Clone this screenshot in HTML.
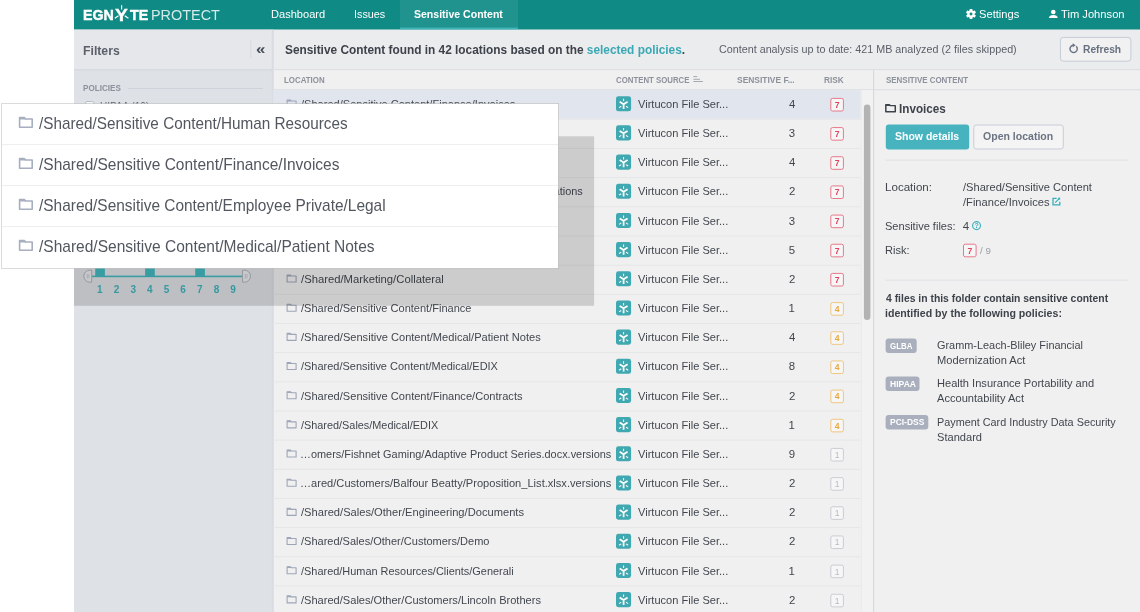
<!DOCTYPE html>
<html><head><meta charset="utf-8"><title>Egnyte Protect - Sensitive Content</title>
<style>
*{box-sizing:border-box;margin:0;padding:0}
html,body{width:1140px;height:612px;overflow:hidden;background:#fff}
body{font-family:"Liberation Sans",sans-serif;font-size:12px;color:#4a4f58;position:relative}
.abs{position:absolute}
.t{position:absolute;white-space:pre;line-height:20px;transform-origin:0 0}
.bd{text-align:center}
#root{position:absolute;left:0;top:0;width:1140px;height:612px;will-change:transform}
</style></head><body>
<div id="root">

<svg class="abs" style="left:0;top:0" width="1140" height="612" viewBox="0 0 1140 612">
<rect x="74.00" y="0.00" width="1066.00" height="612.00" fill="#f0f0f0"/>
<rect x="74.00" y="0.00" width="1066.00" height="29.70" fill="#0f8a84"/>
<rect x="400.00" y="0.00" width="118.00" height="29.70" fill="#21938e"/>
<rect x="400.00" y="27.60" width="118.00" height="2.10" fill="#43b3ba"/>
<rect x="74.00" y="29.70" width="198.30" height="582.30" fill="#dee1e6"/>
<rect x="74.00" y="29.70" width="198.30" height="39.50" fill="#e5e7eb"/>
<rect x="74.00" y="69.20" width="198.30" height="1.20" fill="#d5d8de"/>
<rect x="250.20" y="40.00" width="1.10" height="18.50" fill="#d9dbe0"/>
<rect x="128.00" y="88.00" width="134.70" height="0.90" fill="#cdd1d8"/>
<rect x="272.30" y="29.70" width="867.70" height="39.50" fill="#ebecee"/>
<rect x="272.30" y="69.20" width="867.70" height="1.20" fill="#d9dbe0"/>
<rect x="272.30" y="70.40" width="867.70" height="18.70" fill="#f0f0f0"/>
<rect x="272.30" y="89.10" width="867.70" height="1.20" fill="#dcdfe5"/>
<rect x="271.80" y="29.70" width="2.00" height="582.30" fill="#d9dce3"/>
<rect x="273.20" y="90.30" width="587.60" height="28.47" fill="#e1e5ed"/>
<rect x="273.20" y="118.77" width="587.60" height="1.00" fill="#e5e6e8"/>
<g transform="translate(286.60 99.50) scale(1.0000 1.0000)"><path d="M0.5 0.5 H3.9 L4.7 1.5 H9.5 V7.5 H0.5 Z" fill="none" stroke="#9da5b7" stroke-width="1.10" stroke-linejoin="round"/><path d="M0.5 0.5 H3.9 L4.7 1.9 H0.5 Z" fill="#9da5b7"/></g>
<g transform="translate(616.00 96.20) scale(1.0067 1.0067)"><rect width="15" height="15" rx="2.4" fill="#3fa8b1"/><g stroke="#fff" fill="none"><path d="M7.55 12.7 V7.9 L3.6 5.5 M7.55 7.9 L11.5 5.5" stroke-width="1.75"/><path d="M7.55 2.5 V5 M3.0 11.4 L5.2 10 M12.1 11.4 L9.9 10" stroke-width="1.0"/></g></g>
<rect x="830.80" y="98.40" width="12.60" height="12.60" rx="1.70" fill="#f6f6f6" stroke="#e7788b" stroke-width="1.00"/>
<rect x="273.20" y="147.94" width="587.60" height="1.00" fill="#e5e6e8"/>
<g transform="translate(286.60 128.67) scale(1.0000 1.0000)"><path d="M0.5 0.5 H3.9 L4.7 1.5 H9.5 V7.5 H0.5 Z" fill="none" stroke="#9da5b7" stroke-width="1.10" stroke-linejoin="round"/><path d="M0.5 0.5 H3.9 L4.7 1.9 H0.5 Z" fill="#9da5b7"/></g>
<g transform="translate(616.00 125.37) scale(1.0067 1.0067)"><rect width="15" height="15" rx="2.4" fill="#3fa8b1"/><g stroke="#fff" fill="none"><path d="M7.55 12.7 V7.9 L3.6 5.5 M7.55 7.9 L11.5 5.5" stroke-width="1.75"/><path d="M7.55 2.5 V5 M3.0 11.4 L5.2 10 M12.1 11.4 L9.9 10" stroke-width="1.0"/></g></g>
<rect x="830.80" y="127.57" width="12.60" height="12.60" rx="1.70" fill="#f6f6f6" stroke="#e7788b" stroke-width="1.00"/>
<rect x="273.20" y="177.11" width="587.60" height="1.00" fill="#e5e6e8"/>
<g transform="translate(286.60 157.84) scale(1.0000 1.0000)"><path d="M0.5 0.5 H3.9 L4.7 1.5 H9.5 V7.5 H0.5 Z" fill="none" stroke="#9da5b7" stroke-width="1.10" stroke-linejoin="round"/><path d="M0.5 0.5 H3.9 L4.7 1.9 H0.5 Z" fill="#9da5b7"/></g>
<g transform="translate(616.00 154.54) scale(1.0067 1.0067)"><rect width="15" height="15" rx="2.4" fill="#3fa8b1"/><g stroke="#fff" fill="none"><path d="M7.55 12.7 V7.9 L3.6 5.5 M7.55 7.9 L11.5 5.5" stroke-width="1.75"/><path d="M7.55 2.5 V5 M3.0 11.4 L5.2 10 M12.1 11.4 L9.9 10" stroke-width="1.0"/></g></g>
<rect x="830.80" y="156.74" width="12.60" height="12.60" rx="1.70" fill="#f6f6f6" stroke="#e7788b" stroke-width="1.00"/>
<rect x="273.20" y="206.28" width="587.60" height="1.00" fill="#e5e6e8"/>
<g transform="translate(286.60 187.01) scale(1.0000 1.0000)"><path d="M0.5 0.5 H3.9 L4.7 1.5 H9.5 V7.5 H0.5 Z" fill="none" stroke="#9da5b7" stroke-width="1.10" stroke-linejoin="round"/><path d="M0.5 0.5 H3.9 L4.7 1.9 H0.5 Z" fill="#9da5b7"/></g>
<g transform="translate(616.00 183.71) scale(1.0067 1.0067)"><rect width="15" height="15" rx="2.4" fill="#3fa8b1"/><g stroke="#fff" fill="none"><path d="M7.55 12.7 V7.9 L3.6 5.5 M7.55 7.9 L11.5 5.5" stroke-width="1.75"/><path d="M7.55 2.5 V5 M3.0 11.4 L5.2 10 M12.1 11.4 L9.9 10" stroke-width="1.0"/></g></g>
<rect x="830.80" y="185.91" width="12.60" height="12.60" rx="1.70" fill="#f6f6f6" stroke="#e7788b" stroke-width="1.00"/>
<rect x="273.20" y="235.45" width="587.60" height="1.00" fill="#e5e6e8"/>
<g transform="translate(286.60 216.18) scale(1.0000 1.0000)"><path d="M0.5 0.5 H3.9 L4.7 1.5 H9.5 V7.5 H0.5 Z" fill="none" stroke="#9da5b7" stroke-width="1.10" stroke-linejoin="round"/><path d="M0.5 0.5 H3.9 L4.7 1.9 H0.5 Z" fill="#9da5b7"/></g>
<g transform="translate(616.00 212.88) scale(1.0067 1.0067)"><rect width="15" height="15" rx="2.4" fill="#3fa8b1"/><g stroke="#fff" fill="none"><path d="M7.55 12.7 V7.9 L3.6 5.5 M7.55 7.9 L11.5 5.5" stroke-width="1.75"/><path d="M7.55 2.5 V5 M3.0 11.4 L5.2 10 M12.1 11.4 L9.9 10" stroke-width="1.0"/></g></g>
<rect x="830.80" y="215.08" width="12.60" height="12.60" rx="1.70" fill="#f6f6f6" stroke="#e7788b" stroke-width="1.00"/>
<rect x="273.20" y="264.62" width="587.60" height="1.00" fill="#e5e6e8"/>
<g transform="translate(286.60 245.35) scale(1.0000 1.0000)"><path d="M0.5 0.5 H3.9 L4.7 1.5 H9.5 V7.5 H0.5 Z" fill="none" stroke="#9da5b7" stroke-width="1.10" stroke-linejoin="round"/><path d="M0.5 0.5 H3.9 L4.7 1.9 H0.5 Z" fill="#9da5b7"/></g>
<g transform="translate(616.00 242.05) scale(1.0067 1.0067)"><rect width="15" height="15" rx="2.4" fill="#3fa8b1"/><g stroke="#fff" fill="none"><path d="M7.55 12.7 V7.9 L3.6 5.5 M7.55 7.9 L11.5 5.5" stroke-width="1.75"/><path d="M7.55 2.5 V5 M3.0 11.4 L5.2 10 M12.1 11.4 L9.9 10" stroke-width="1.0"/></g></g>
<rect x="830.80" y="244.25" width="12.60" height="12.60" rx="1.70" fill="#f6f6f6" stroke="#e7788b" stroke-width="1.00"/>
<rect x="273.20" y="293.79" width="587.60" height="1.00" fill="#e5e6e8"/>
<g transform="translate(286.60 274.52) scale(1.0000 1.0000)"><path d="M0.5 0.5 H3.9 L4.7 1.5 H9.5 V7.5 H0.5 Z" fill="none" stroke="#9da5b7" stroke-width="1.10" stroke-linejoin="round"/><path d="M0.5 0.5 H3.9 L4.7 1.9 H0.5 Z" fill="#9da5b7"/></g>
<g transform="translate(616.00 271.22) scale(1.0067 1.0067)"><rect width="15" height="15" rx="2.4" fill="#3fa8b1"/><g stroke="#fff" fill="none"><path d="M7.55 12.7 V7.9 L3.6 5.5 M7.55 7.9 L11.5 5.5" stroke-width="1.75"/><path d="M7.55 2.5 V5 M3.0 11.4 L5.2 10 M12.1 11.4 L9.9 10" stroke-width="1.0"/></g></g>
<rect x="830.80" y="273.42" width="12.60" height="12.60" rx="1.70" fill="#f6f6f6" stroke="#e7788b" stroke-width="1.00"/>
<rect x="273.20" y="322.96" width="587.60" height="1.00" fill="#e5e6e8"/>
<g transform="translate(286.60 303.69) scale(1.0000 1.0000)"><path d="M0.5 0.5 H3.9 L4.7 1.5 H9.5 V7.5 H0.5 Z" fill="none" stroke="#9da5b7" stroke-width="1.10" stroke-linejoin="round"/><path d="M0.5 0.5 H3.9 L4.7 1.9 H0.5 Z" fill="#9da5b7"/></g>
<g transform="translate(616.00 300.39) scale(1.0067 1.0067)"><rect width="15" height="15" rx="2.4" fill="#3fa8b1"/><g stroke="#fff" fill="none"><path d="M7.55 12.7 V7.9 L3.6 5.5 M7.55 7.9 L11.5 5.5" stroke-width="1.75"/><path d="M7.55 2.5 V5 M3.0 11.4 L5.2 10 M12.1 11.4 L9.9 10" stroke-width="1.0"/></g></g>
<rect x="830.80" y="302.59" width="12.60" height="12.60" rx="1.70" fill="#f6f6f6" stroke="#f0c67f" stroke-width="1.00"/>
<rect x="273.20" y="352.13" width="587.60" height="1.00" fill="#e5e6e8"/>
<g transform="translate(286.60 332.86) scale(1.0000 1.0000)"><path d="M0.5 0.5 H3.9 L4.7 1.5 H9.5 V7.5 H0.5 Z" fill="none" stroke="#9da5b7" stroke-width="1.10" stroke-linejoin="round"/><path d="M0.5 0.5 H3.9 L4.7 1.9 H0.5 Z" fill="#9da5b7"/></g>
<g transform="translate(616.00 329.56) scale(1.0067 1.0067)"><rect width="15" height="15" rx="2.4" fill="#3fa8b1"/><g stroke="#fff" fill="none"><path d="M7.55 12.7 V7.9 L3.6 5.5 M7.55 7.9 L11.5 5.5" stroke-width="1.75"/><path d="M7.55 2.5 V5 M3.0 11.4 L5.2 10 M12.1 11.4 L9.9 10" stroke-width="1.0"/></g></g>
<rect x="830.80" y="331.76" width="12.60" height="12.60" rx="1.70" fill="#f6f6f6" stroke="#f0c67f" stroke-width="1.00"/>
<rect x="273.20" y="381.30" width="587.60" height="1.00" fill="#e5e6e8"/>
<g transform="translate(286.60 362.03) scale(1.0000 1.0000)"><path d="M0.5 0.5 H3.9 L4.7 1.5 H9.5 V7.5 H0.5 Z" fill="none" stroke="#9da5b7" stroke-width="1.10" stroke-linejoin="round"/><path d="M0.5 0.5 H3.9 L4.7 1.9 H0.5 Z" fill="#9da5b7"/></g>
<g transform="translate(616.00 358.73) scale(1.0067 1.0067)"><rect width="15" height="15" rx="2.4" fill="#3fa8b1"/><g stroke="#fff" fill="none"><path d="M7.55 12.7 V7.9 L3.6 5.5 M7.55 7.9 L11.5 5.5" stroke-width="1.75"/><path d="M7.55 2.5 V5 M3.0 11.4 L5.2 10 M12.1 11.4 L9.9 10" stroke-width="1.0"/></g></g>
<rect x="830.80" y="360.93" width="12.60" height="12.60" rx="1.70" fill="#f6f6f6" stroke="#f0c67f" stroke-width="1.00"/>
<rect x="273.20" y="410.47" width="587.60" height="1.00" fill="#e5e6e8"/>
<g transform="translate(286.60 391.20) scale(1.0000 1.0000)"><path d="M0.5 0.5 H3.9 L4.7 1.5 H9.5 V7.5 H0.5 Z" fill="none" stroke="#9da5b7" stroke-width="1.10" stroke-linejoin="round"/><path d="M0.5 0.5 H3.9 L4.7 1.9 H0.5 Z" fill="#9da5b7"/></g>
<g transform="translate(616.00 387.90) scale(1.0067 1.0067)"><rect width="15" height="15" rx="2.4" fill="#3fa8b1"/><g stroke="#fff" fill="none"><path d="M7.55 12.7 V7.9 L3.6 5.5 M7.55 7.9 L11.5 5.5" stroke-width="1.75"/><path d="M7.55 2.5 V5 M3.0 11.4 L5.2 10 M12.1 11.4 L9.9 10" stroke-width="1.0"/></g></g>
<rect x="830.80" y="390.10" width="12.60" height="12.60" rx="1.70" fill="#f6f6f6" stroke="#f0c67f" stroke-width="1.00"/>
<rect x="273.20" y="439.64" width="587.60" height="1.00" fill="#e5e6e8"/>
<g transform="translate(286.60 420.37) scale(1.0000 1.0000)"><path d="M0.5 0.5 H3.9 L4.7 1.5 H9.5 V7.5 H0.5 Z" fill="none" stroke="#9da5b7" stroke-width="1.10" stroke-linejoin="round"/><path d="M0.5 0.5 H3.9 L4.7 1.9 H0.5 Z" fill="#9da5b7"/></g>
<g transform="translate(616.00 417.07) scale(1.0067 1.0067)"><rect width="15" height="15" rx="2.4" fill="#3fa8b1"/><g stroke="#fff" fill="none"><path d="M7.55 12.7 V7.9 L3.6 5.5 M7.55 7.9 L11.5 5.5" stroke-width="1.75"/><path d="M7.55 2.5 V5 M3.0 11.4 L5.2 10 M12.1 11.4 L9.9 10" stroke-width="1.0"/></g></g>
<rect x="830.80" y="419.27" width="12.60" height="12.60" rx="1.70" fill="#f6f6f6" stroke="#f0c67f" stroke-width="1.00"/>
<rect x="273.20" y="468.81" width="587.60" height="1.00" fill="#e5e6e8"/>
<g transform="translate(286.60 449.54) scale(1.0000 1.0000)"><path d="M0.5 0.5 H3.9 L4.7 1.5 H9.5 V7.5 H0.5 Z" fill="none" stroke="#9da5b7" stroke-width="1.10" stroke-linejoin="round"/><path d="M0.5 0.5 H3.9 L4.7 1.9 H0.5 Z" fill="#9da5b7"/></g>
<g transform="translate(616.00 446.24) scale(1.0067 1.0067)"><rect width="15" height="15" rx="2.4" fill="#3fa8b1"/><g stroke="#fff" fill="none"><path d="M7.55 12.7 V7.9 L3.6 5.5 M7.55 7.9 L11.5 5.5" stroke-width="1.75"/><path d="M7.55 2.5 V5 M3.0 11.4 L5.2 10 M12.1 11.4 L9.9 10" stroke-width="1.0"/></g></g>
<rect x="830.80" y="448.44" width="12.60" height="12.60" rx="1.70" fill="#f6f6f6" stroke="#c9ccd3" stroke-width="1.00"/>
<rect x="273.20" y="497.98" width="587.60" height="1.00" fill="#e5e6e8"/>
<g transform="translate(286.60 478.71) scale(1.0000 1.0000)"><path d="M0.5 0.5 H3.9 L4.7 1.5 H9.5 V7.5 H0.5 Z" fill="none" stroke="#9da5b7" stroke-width="1.10" stroke-linejoin="round"/><path d="M0.5 0.5 H3.9 L4.7 1.9 H0.5 Z" fill="#9da5b7"/></g>
<g transform="translate(616.00 475.41) scale(1.0067 1.0067)"><rect width="15" height="15" rx="2.4" fill="#3fa8b1"/><g stroke="#fff" fill="none"><path d="M7.55 12.7 V7.9 L3.6 5.5 M7.55 7.9 L11.5 5.5" stroke-width="1.75"/><path d="M7.55 2.5 V5 M3.0 11.4 L5.2 10 M12.1 11.4 L9.9 10" stroke-width="1.0"/></g></g>
<rect x="830.80" y="477.61" width="12.60" height="12.60" rx="1.70" fill="#f6f6f6" stroke="#c9ccd3" stroke-width="1.00"/>
<rect x="273.20" y="527.15" width="587.60" height="1.00" fill="#e5e6e8"/>
<g transform="translate(286.60 507.88) scale(1.0000 1.0000)"><path d="M0.5 0.5 H3.9 L4.7 1.5 H9.5 V7.5 H0.5 Z" fill="none" stroke="#9da5b7" stroke-width="1.10" stroke-linejoin="round"/><path d="M0.5 0.5 H3.9 L4.7 1.9 H0.5 Z" fill="#9da5b7"/></g>
<g transform="translate(616.00 504.58) scale(1.0067 1.0067)"><rect width="15" height="15" rx="2.4" fill="#3fa8b1"/><g stroke="#fff" fill="none"><path d="M7.55 12.7 V7.9 L3.6 5.5 M7.55 7.9 L11.5 5.5" stroke-width="1.75"/><path d="M7.55 2.5 V5 M3.0 11.4 L5.2 10 M12.1 11.4 L9.9 10" stroke-width="1.0"/></g></g>
<rect x="830.80" y="506.78" width="12.60" height="12.60" rx="1.70" fill="#f6f6f6" stroke="#c9ccd3" stroke-width="1.00"/>
<rect x="273.20" y="556.32" width="587.60" height="1.00" fill="#e5e6e8"/>
<g transform="translate(286.60 537.05) scale(1.0000 1.0000)"><path d="M0.5 0.5 H3.9 L4.7 1.5 H9.5 V7.5 H0.5 Z" fill="none" stroke="#9da5b7" stroke-width="1.10" stroke-linejoin="round"/><path d="M0.5 0.5 H3.9 L4.7 1.9 H0.5 Z" fill="#9da5b7"/></g>
<g transform="translate(616.00 533.75) scale(1.0067 1.0067)"><rect width="15" height="15" rx="2.4" fill="#3fa8b1"/><g stroke="#fff" fill="none"><path d="M7.55 12.7 V7.9 L3.6 5.5 M7.55 7.9 L11.5 5.5" stroke-width="1.75"/><path d="M7.55 2.5 V5 M3.0 11.4 L5.2 10 M12.1 11.4 L9.9 10" stroke-width="1.0"/></g></g>
<rect x="830.80" y="535.95" width="12.60" height="12.60" rx="1.70" fill="#f6f6f6" stroke="#c9ccd3" stroke-width="1.00"/>
<rect x="273.20" y="585.49" width="587.60" height="1.00" fill="#e5e6e8"/>
<g transform="translate(286.60 566.22) scale(1.0000 1.0000)"><path d="M0.5 0.5 H3.9 L4.7 1.5 H9.5 V7.5 H0.5 Z" fill="none" stroke="#9da5b7" stroke-width="1.10" stroke-linejoin="round"/><path d="M0.5 0.5 H3.9 L4.7 1.9 H0.5 Z" fill="#9da5b7"/></g>
<g transform="translate(616.00 562.92) scale(1.0067 1.0067)"><rect width="15" height="15" rx="2.4" fill="#3fa8b1"/><g stroke="#fff" fill="none"><path d="M7.55 12.7 V7.9 L3.6 5.5 M7.55 7.9 L11.5 5.5" stroke-width="1.75"/><path d="M7.55 2.5 V5 M3.0 11.4 L5.2 10 M12.1 11.4 L9.9 10" stroke-width="1.0"/></g></g>
<rect x="830.80" y="565.12" width="12.60" height="12.60" rx="1.70" fill="#f6f6f6" stroke="#c9ccd3" stroke-width="1.00"/>
<rect x="273.20" y="614.66" width="587.60" height="1.00" fill="#e5e6e8"/>
<g transform="translate(286.60 595.39) scale(1.0000 1.0000)"><path d="M0.5 0.5 H3.9 L4.7 1.5 H9.5 V7.5 H0.5 Z" fill="none" stroke="#9da5b7" stroke-width="1.10" stroke-linejoin="round"/><path d="M0.5 0.5 H3.9 L4.7 1.9 H0.5 Z" fill="#9da5b7"/></g>
<g transform="translate(616.00 592.09) scale(1.0067 1.0067)"><rect width="15" height="15" rx="2.4" fill="#3fa8b1"/><g stroke="#fff" fill="none"><path d="M7.55 12.7 V7.9 L3.6 5.5 M7.55 7.9 L11.5 5.5" stroke-width="1.75"/><path d="M7.55 2.5 V5 M3.0 11.4 L5.2 10 M12.1 11.4 L9.9 10" stroke-width="1.0"/></g></g>
<rect x="830.80" y="594.29" width="12.60" height="12.60" rx="1.70" fill="#f6f6f6" stroke="#c9ccd3" stroke-width="1.00"/>
<rect x="860.80" y="90.30" width="12.40" height="521.70" fill="#f2f2f2"/>
<rect x="860.80" y="90.30" width="1.00" height="521.70" fill="#e9e9e9"/>
<rect x="863.90" y="104.50" width="6.50" height="215.50" rx="3.25" fill="#b3b3b3"/>
<rect x="873.00" y="70.40" width="1.20" height="541.60" fill="#d6d9e0"/>
<rect x="85.50" y="101.50" width="8.50" height="8.50" rx="1.50" fill="#f4f5f7" stroke="#b9bec8" stroke-width="1.00"/>
<rect x="95.20" y="262.00" width="9.70" height="14.00" fill="#45b8c0"/>
<rect x="145.10" y="262.00" width="9.70" height="14.00" fill="#45b8c0"/>
<rect x="195.20" y="262.00" width="9.70" height="14.00" fill="#45b8c0"/>
<rect x="91.70" y="275.60" width="151.00" height="1.60" fill="#45b8c0"/>
<path d="M91.7 270.2 H89.8 A6 6 0 0 0 89.8 282.2 H91.7 Z" fill="#e9ebee" stroke="#aeb3bc" stroke-width="1"/>
<path d="M242.6 270.2 H244.5 A6 6 0 0 1 244.5 282.2 H242.6 Z" fill="#e9ebee" stroke="#aeb3bc" stroke-width="1"/>
<path d="M87.3 274 V278.4 M88.9 274 V278.4 M245.4 274 V278.4 M247 274 V278.4" stroke="#b9bdc5" stroke-width="0.7"/>
<g transform="translate(885.30 104.10) scale(1.0500 1.0250)"><path d="M0.5 0.5 H3.9 L4.7 1.5 H9.5 V7.5 H0.5 Z" fill="none" stroke="#3d424b" stroke-width="1.43" stroke-linejoin="round"/><path d="M0.5 0.5 H3.9 L4.7 1.9 H0.5 Z" fill="#3d424b"/></g>
<rect x="885.80" y="124.50" width="83.40" height="25.00" rx="3.00" fill="#46b3bf"/>
<rect x="973.80" y="125.00" width="89.50" height="24.00" rx="2.50" fill="#f4f4f4" stroke="#c6ced8" stroke-width="1.00"/>
<rect x="885.60" y="159.60" width="242.00" height="1.00" fill="#e0e1e5"/>
<rect x="885.60" y="279.70" width="242.00" height="1.00" fill="#e0e1e5"/>
<rect x="963.50" y="244.20" width="12.60" height="12.60" rx="1.70" fill="#f6f6f6" stroke="#e7788b" stroke-width="1.00"/>
<rect x="885.60" y="338.50" width="31.10" height="14.40" rx="3.00" fill="#a9afbd"/>
<rect x="885.60" y="376.60" width="33.90" height="14.40" rx="3.00" fill="#a9afbd"/>
<rect x="885.60" y="415.00" width="42.70" height="14.40" rx="3.00" fill="#a9afbd"/>
<rect x="1060.40" y="37.40" width="70.50" height="23.80" rx="3.00" fill="#f1f1f1" stroke="#c4cbd5" stroke-width="1.00"/>
<g transform="translate(1073.60 48.90)"><path d="M2.6 -2.6 A3.65 3.65 0 1 1 -0.6 -3.6" fill="none" stroke="#6a7486" stroke-width="1.45"/><path d="M-0.9 -5.6 L2.1 -3.6 L-0.9 -1.7 Z" fill="#6a7486"/></g>
<path d="M121.6 5.3 V9.4 M114.8 18.3 L118.5 15.7 M128.4 18.3 L124.7 15.7" stroke="#fff" stroke-width="1.2"/>
<g transform="translate(971.00 14.05)"><g fill="#fff"><rect x="-1.35" y="-5.05" width="2.7" height="10.1" rx="0.5" transform="rotate(0)"/><rect x="-1.35" y="-5.05" width="2.7" height="10.1" rx="0.5" transform="rotate(60)"/><rect x="-1.35" y="-5.05" width="2.7" height="10.1" rx="0.5" transform="rotate(120)"/><circle r="3.7"/></g><circle r="1.45" fill="#0f8a84"/></g>
<g transform="translate(1048.80 9.50)"><circle cx="4.5" cy="2.45" r="2.3" fill="#fff"/><path d="M0.1 8.6 C0.1 6.4 2 5.45 4.5 5.45 S8.9 6.4 8.9 8.6 Z" fill="#fff"/></g>
<g transform="translate(1052.30 197.50)"><path d="M4.4 0.8 H0.7 V7.3 H7.5 V4.2" fill="none" stroke="#36aebb" stroke-width="1.3"/><path d="M2.9 5.1 L6.6 1.4" stroke="#36aebb" stroke-width="1.2" fill="none"/><circle cx="6.9" cy="1.2" r="1.1" fill="#36aebb"/></g>
<rect x="693.40" y="76.20" width="3.70" height="0.90" fill="#9aa0aa"/>
<rect x="693.40" y="78.80" width="6.60" height="0.90" fill="#9aa0aa"/>
<rect x="693.40" y="81.10" width="9.50" height="0.90" fill="#9aa0aa"/>
<circle cx="976.55" cy="225.6" r="3.95" fill="none" stroke="#3fb2c0" stroke-width="1.2"/>
</svg>
<div class="t" style="left:255.9px;top:39px;font-size:15px;font-weight:700;color:#484e5a;transform:scaleX(1.13)">«</div>
<div class="t bd" style="left:972px;top:216px;width:9.1px;color:#3fb2c0;font-size:7px;font-weight:700">?</div>
<div class="t bd" style="left:830.30px;top:95px;width:13.60px;color:#e04562;font-weight:700;font-size:8.6px">7</div>
<div class="t bd" style="left:830.30px;top:124px;width:13.60px;color:#e04562;font-weight:700;font-size:8.6px">7</div>
<div class="t bd" style="left:830.30px;top:153px;width:13.60px;color:#e04562;font-weight:700;font-size:8.6px">7</div>
<div class="t bd" style="left:830.30px;top:182px;width:13.60px;color:#e04562;font-weight:700;font-size:8.6px">7</div>
<div class="t bd" style="left:830.30px;top:211px;width:13.60px;color:#e04562;font-weight:700;font-size:8.6px">7</div>
<div class="t bd" style="left:830.30px;top:241px;width:13.60px;color:#e04562;font-weight:700;font-size:8.6px">7</div>
<div class="t bd" style="left:830.30px;top:270px;width:13.60px;color:#e04562;font-weight:700;font-size:8.6px">7</div>
<div class="t bd" style="left:830.30px;top:299px;width:13.60px;color:#eaa93b;font-weight:700;font-size:8.6px">4</div>
<div class="t bd" style="left:830.30px;top:328px;width:13.60px;color:#eaa93b;font-weight:700;font-size:8.6px">4</div>
<div class="t bd" style="left:830.30px;top:357px;width:13.60px;color:#eaa93b;font-weight:700;font-size:8.6px">4</div>
<div class="t bd" style="left:830.30px;top:386px;width:13.60px;color:#eaa93b;font-weight:700;font-size:8.6px">4</div>
<div class="t bd" style="left:830.30px;top:416px;width:13.60px;color:#eaa93b;font-weight:700;font-size:8.6px">4</div>
<div class="t bd" style="left:830.30px;top:445px;width:13.60px;color:#b7bbc4;font-weight:400;font-size:8.6px">1</div>
<div class="t bd" style="left:830.30px;top:474px;width:13.60px;color:#b7bbc4;font-weight:400;font-size:8.6px">1</div>
<div class="t bd" style="left:830.30px;top:503px;width:13.60px;color:#b7bbc4;font-weight:400;font-size:8.6px">1</div>
<div class="t bd" style="left:830.30px;top:532px;width:13.60px;color:#b7bbc4;font-weight:400;font-size:8.6px">1</div>
<div class="t bd" style="left:830.30px;top:562px;width:13.60px;color:#b7bbc4;font-weight:400;font-size:8.6px">1</div>
<div class="t bd" style="left:830.30px;top:591px;width:13.60px;color:#b7bbc4;font-weight:400;font-size:8.6px">1</div>
<div class="t bd" style="left:963.00px;top:241px;width:13.60px;color:#e04562;font-weight:700;font-size:8.6px">7</div>
<div class="logo"><div class="t" style="left:82.66px;top:6px;font-size:13.8px;font-weight:700;color:#fff;transform:scaleX(1.0282);-webkit-text-stroke:.45px #fff">EGN</div><div class="t" style="left:114.99px;top:5px;font-size:16.5px;font-weight:700;color:#fff;transform:scaleX(1.1676);-webkit-text-stroke:.3px #fff">Y</div><div class="t" style="left:130.20px;top:6px;font-size:13.8px;font-weight:700;color:#fff;transform:scaleX(1.0318);-webkit-text-stroke:.45px #fff">TE</div><div class="t" style="left:151.34px;top:6px;font-size:13.8px;font-weight:400;color:rgba(255,255,255,.82);transform:scaleX(1.0450)">PROTECT</div></div>
<div class="t" style="left:271.01px;top:4px;font-size:11.5px;font-weight:400;color:#fff;transform:scaleX(0.9628)">Dashboard</div>
<div class="t" style="left:353.86px;top:4px;font-size:11.5px;font-weight:400;color:#fff;transform:scaleX(0.9388)">Issues</div>
<div class="t" style="left:414.26px;top:4px;font-size:11.5px;font-weight:700;color:#fff;transform:scaleX(0.9149)">Sensitive Content</div>
<div class="t" style="left:979.33px;top:4px;font-size:11.5px;font-weight:400;color:#fff;transform:scaleX(0.9698)">Settings</div>
<div class="t" style="left:1061.22px;top:4px;font-size:11.5px;font-weight:400;color:#fff;transform:scaleX(0.9719)">Tim Johnson</div>
<div class="t" style="left:82.76px;top:41px;font-size:12.5px;font-weight:700;color:#5b606b;transform:scaleX(0.9796)">Filters</div>
<div class="t" style="left:83.01px;top:78px;font-size:8.5px;font-weight:700;color:#8c919b;transform:scaleX(0.9526)">POLICIES</div>
<div class="t" style="left:100.29px;top:96px;font-size:11.5px;font-weight:400;color:#5d626b;transform:scaleX(0.8685)">HIPAA (10)</div>
<div class="t" style="left:96.97px;top:280px;font-size:10px;font-weight:700;color:#42b3bd">1</div>
<div class="t" style="left:113.83px;top:280px;font-size:10px;font-weight:700;color:#42b3bd">2</div>
<div class="t" style="left:130.38px;top:280px;font-size:10px;font-weight:700;color:#42b3bd">3</div>
<div class="t" style="left:147.01px;top:280px;font-size:10px;font-weight:700;color:#42b3bd">4</div>
<div class="t" style="left:163.63px;top:280px;font-size:10px;font-weight:700;color:#42b3bd">5</div>
<div class="t" style="left:180.36px;top:280px;font-size:10px;font-weight:700;color:#42b3bd">6</div>
<div class="t" style="left:197.00px;top:280px;font-size:10px;font-weight:700;color:#42b3bd">7</div>
<div class="t" style="left:213.64px;top:280px;font-size:10px;font-weight:700;color:#42b3bd">8</div>
<div class="t" style="left:230.30px;top:280px;font-size:10px;font-weight:700;color:#42b3bd">9</div>
<div class="t" style="left:284.76px;top:40px;font-size:12.5px;font-weight:700;color:#3d424b;transform:scaleX(0.9490)">Sensitive Content found in 42 locations based on the <span style="color:#3ba9b5">selected policies</span>.</div>
<div class="t" style="left:719.48px;top:39px;font-size:11.5px;font-weight:400;color:#5a5f68;transform:scaleX(0.9351)">Content analysis up to date: 421 MB analyzed (2 files skipped)</div>
<div class="t" style="left:1083.36px;top:39px;font-size:11.2px;font-weight:700;color:#66707f;transform:scaleX(0.9149)">Refresh</div>
<div class="t" style="left:284.21px;top:70px;font-size:9.0px;font-weight:700;color:#8c919b;transform:scaleX(0.8768)">LOCATION</div>
<div class="t" style="left:615.65px;top:70px;font-size:9.0px;font-weight:700;color:#8c919b;transform:scaleX(0.8696)">CONTENT SOURCE</div>
<div class="t" style="left:737.01px;top:70px;font-size:9.0px;font-weight:700;color:#8c919b;transform:scaleX(0.9379)">SENSITIVE F...</div>
<div class="t" style="left:824.49px;top:70px;font-size:9.0px;font-weight:700;color:#8c919b;transform:scaleX(0.9182)">RISK</div>
<div class="t" style="left:885.54px;top:70px;font-size:9.0px;font-weight:700;color:#8c919b;transform:scaleX(0.8824)">SENSITIVE CONTENT</div>
<div class="t" style="left:300.80px;top:94px;font-size:11.4px;font-weight:400;color:#42474f;transform:scaleX(0.9700)">/Shared/Sensitive Content/Finance/Invoices</div>
<div class="t" style="left:637.69px;top:94px;font-size:11.4px;font-weight:400;color:#42474f;transform:scaleX(0.9717)">Virtucon File Ser...</div>
<div class="t" style="left:788.94px;top:94px;font-size:11.4px;font-weight:400;color:#42474f">4</div>
<div class="t" style="left:300.81px;top:123px;font-size:11.4px;font-weight:400;color:#42474f;transform:scaleX(0.9240)">/Shared/Sensitive Content/Human Resources</div>
<div class="t" style="left:637.69px;top:123px;font-size:11.4px;font-weight:400;color:#42474f;transform:scaleX(0.9717)">Virtucon File Ser...</div>
<div class="t" style="left:788.81px;top:123px;font-size:11.4px;font-weight:400;color:#42474f">3</div>
<div class="t" style="left:300.80px;top:152px;font-size:11.4px;font-weight:400;color:#42474f;transform:scaleX(0.9682)">/Shared/Sensitive Content/Employee Private</div>
<div class="t" style="left:637.69px;top:152px;font-size:11.4px;font-weight:400;color:#42474f;transform:scaleX(0.9717)">Virtucon File Ser...</div>
<div class="t" style="left:788.94px;top:152px;font-size:11.4px;font-weight:400;color:#42474f">4</div>
<div class="t" style="left:300.80px;top:181px;font-size:11.4px;font-weight:400;color:#42474f;transform:scaleX(0.9572)">/Shared/Sensitive Content/Human Resources/Applications</div>
<div class="t" style="left:637.69px;top:181px;font-size:11.4px;font-weight:400;color:#42474f;transform:scaleX(0.9717)">Virtucon File Ser...</div>
<div class="t" style="left:788.90px;top:181px;font-size:11.4px;font-weight:400;color:#42474f">2</div>
<div class="t" style="left:300.80px;top:211px;font-size:11.4px;font-weight:400;color:#42474f;transform:scaleX(0.9732)">/Shared/Sensitive Content/Employee Private/Legal</div>
<div class="t" style="left:637.69px;top:211px;font-size:11.4px;font-weight:400;color:#42474f;transform:scaleX(0.9717)">Virtucon File Ser...</div>
<div class="t" style="left:788.81px;top:211px;font-size:11.4px;font-weight:400;color:#42474f">3</div>
<div class="t" style="left:300.79px;top:240px;font-size:11.4px;font-weight:400;color:#42474f;transform:scaleX(0.9805)">/Shared/Sensitive Content/Medical</div>
<div class="t" style="left:637.69px;top:240px;font-size:11.4px;font-weight:400;color:#42474f;transform:scaleX(0.9717)">Virtucon File Ser...</div>
<div class="t" style="left:788.79px;top:240px;font-size:11.4px;font-weight:400;color:#42474f">5</div>
<div class="t" style="left:300.79px;top:269px;font-size:11.4px;font-weight:400;color:#42474f;transform:scaleX(0.9897)">/Shared/Marketing/Collateral</div>
<div class="t" style="left:637.69px;top:269px;font-size:11.4px;font-weight:400;color:#42474f;transform:scaleX(0.9717)">Virtucon File Ser...</div>
<div class="t" style="left:788.90px;top:269px;font-size:11.4px;font-weight:400;color:#42474f">2</div>
<div class="t" style="left:300.80px;top:298px;font-size:11.4px;font-weight:400;color:#42474f;transform:scaleX(0.9685)">/Shared/Sensitive Content/Finance</div>
<div class="t" style="left:637.69px;top:298px;font-size:11.4px;font-weight:400;color:#42474f;transform:scaleX(0.9717)">Virtucon File Ser...</div>
<div class="t" style="left:788.59px;top:298px;font-size:11.4px;font-weight:400;color:#42474f">1</div>
<div class="t" style="left:300.80px;top:327px;font-size:11.4px;font-weight:400;color:#42474f;transform:scaleX(0.9731)">/Shared/Sensitive Content/Medical/Patient Notes</div>
<div class="t" style="left:637.69px;top:327px;font-size:11.4px;font-weight:400;color:#42474f;transform:scaleX(0.9717)">Virtucon File Ser...</div>
<div class="t" style="left:788.94px;top:327px;font-size:11.4px;font-weight:400;color:#42474f">4</div>
<div class="t" style="left:300.80px;top:356px;font-size:11.4px;font-weight:400;color:#42474f;transform:scaleX(0.9630)">/Shared/Sensitive Content/Medical/EDIX</div>
<div class="t" style="left:637.69px;top:356px;font-size:11.4px;font-weight:400;color:#42474f;transform:scaleX(0.9717)">Virtucon File Ser...</div>
<div class="t" style="left:788.86px;top:356px;font-size:11.4px;font-weight:400;color:#42474f">8</div>
<div class="t" style="left:300.80px;top:386px;font-size:11.4px;font-weight:400;color:#42474f;transform:scaleX(0.9718)">/Shared/Sensitive Content/Finance/Contracts</div>
<div class="t" style="left:637.69px;top:386px;font-size:11.4px;font-weight:400;color:#42474f;transform:scaleX(0.9717)">Virtucon File Ser...</div>
<div class="t" style="left:788.90px;top:386px;font-size:11.4px;font-weight:400;color:#42474f">2</div>
<div class="t" style="left:300.80px;top:415px;font-size:11.4px;font-weight:400;color:#42474f;transform:scaleX(0.9543)">/Shared/Sales/Medical/EDIX</div>
<div class="t" style="left:637.69px;top:415px;font-size:11.4px;font-weight:400;color:#42474f;transform:scaleX(0.9717)">Virtucon File Ser...</div>
<div class="t" style="left:788.59px;top:415px;font-size:11.4px;font-weight:400;color:#42474f">1</div>
<div class="t" style="left:299.57px;top:444px;font-size:11.4px;font-weight:400;color:#42474f;transform:scaleX(0.9585)">…omers/Fishnet Gaming/Adaptive Product Series.docx.versions</div>
<div class="t" style="left:637.69px;top:444px;font-size:11.4px;font-weight:400;color:#42474f;transform:scaleX(0.9717)">Virtucon File Ser...</div>
<div class="t" style="left:788.82px;top:444px;font-size:11.4px;font-weight:400;color:#42474f">9</div>
<div class="t" style="left:299.54px;top:473px;font-size:11.4px;font-weight:400;color:#42474f;transform:scaleX(0.9736)">…ared/Customers/Balfour Beatty/Proposition_List.xlsx.versions</div>
<div class="t" style="left:637.69px;top:473px;font-size:11.4px;font-weight:400;color:#42474f;transform:scaleX(0.9717)">Virtucon File Ser...</div>
<div class="t" style="left:788.90px;top:473px;font-size:11.4px;font-weight:400;color:#42474f">2</div>
<div class="t" style="left:300.80px;top:502px;font-size:11.4px;font-weight:400;color:#42474f;transform:scaleX(0.9784)">/Shared/Sales/Other/Engineering/Documents</div>
<div class="t" style="left:637.69px;top:502px;font-size:11.4px;font-weight:400;color:#42474f;transform:scaleX(0.9717)">Virtucon File Ser...</div>
<div class="t" style="left:788.90px;top:502px;font-size:11.4px;font-weight:400;color:#42474f">2</div>
<div class="t" style="left:300.80px;top:531px;font-size:11.4px;font-weight:400;color:#42474f;transform:scaleX(0.9666)">/Shared/Sales/Other/Customers/Demo</div>
<div class="t" style="left:637.69px;top:531px;font-size:11.4px;font-weight:400;color:#42474f;transform:scaleX(0.9717)">Virtucon File Ser...</div>
<div class="t" style="left:788.90px;top:531px;font-size:11.4px;font-weight:400;color:#42474f">2</div>
<div class="t" style="left:300.80px;top:561px;font-size:11.4px;font-weight:400;color:#42474f;transform:scaleX(0.9598)">/Shared/Human Resources/Clients/Generali</div>
<div class="t" style="left:637.69px;top:561px;font-size:11.4px;font-weight:400;color:#42474f;transform:scaleX(0.9717)">Virtucon File Ser...</div>
<div class="t" style="left:788.59px;top:561px;font-size:11.4px;font-weight:400;color:#42474f">1</div>
<div class="t" style="left:300.80px;top:590px;font-size:11.4px;font-weight:400;color:#42474f;transform:scaleX(0.9719)">/Shared/Sales/Other/Customers/Lincoln Brothers</div>
<div class="t" style="left:637.69px;top:590px;font-size:11.4px;font-weight:400;color:#42474f;transform:scaleX(0.9717)">Virtucon File Ser...</div>
<div class="t" style="left:788.90px;top:590px;font-size:11.4px;font-weight:400;color:#42474f">2</div>
<div class="t" style="left:899.19px;top:99px;font-size:13px;font-weight:700;color:#3d424b;transform:scaleX(0.9005)">Invoices</div>
<div class="t" style="left:895.35px;top:126px;font-size:11.3px;font-weight:700;color:#fff;transform:scaleX(0.9294)">Show details</div>
<div class="t" style="left:983.29px;top:126px;font-size:11.3px;font-weight:700;color:#6c7483;transform:scaleX(0.9326)">Open location</div>
<div class="t" style="left:884.77px;top:177px;font-size:11.5px;font-weight:400;color:#42474f;transform:scaleX(1.0068)">Location:</div>
<div class="t" style="left:962.80px;top:177px;font-size:11.5px;font-weight:400;color:#42474f;transform:scaleX(0.9648)">/Shared/Sensitive Content</div>
<div class="t" style="left:962.80px;top:192px;font-size:11.5px;font-weight:400;color:#42474f;transform:scaleX(0.9663)">/Finance/Invoices</div>
<div class="t" style="left:884.94px;top:216px;font-size:11.5px;font-weight:400;color:#42474f;transform:scaleX(0.9599)">Sensitive files:</div>
<div class="t" style="left:962.64px;top:216px;font-size:11.5px;font-weight:400;color:#42474f">4</div>
<div class="t" style="left:884.81px;top:240px;font-size:11.5px;font-weight:400;color:#42474f;transform:scaleX(0.9601)">Risk:</div>
<div class="t" style="left:980.10px;top:241px;font-size:9.5px;font-weight:400;color:#9a9ea6;transform:scaleX(1.0275)">/ 9</div>
<div class="t" style="left:885.51px;top:288px;font-size:11.5px;font-weight:700;color:#3d424b;transform:scaleX(0.9028)">4 files in this folder contain sensitive content</div>
<div class="t" style="left:884.93px;top:303px;font-size:11.5px;font-weight:700;color:#3d424b;transform:scaleX(0.9230)">identified by the following policies:</div>
<div class="t" style="left:890.05px;top:336px;font-size:9px;font-weight:700;color:#fff;transform:scaleX(0.8769)">GLBA</div>
<div class="t" style="left:889.87px;top:374px;font-size:9px;font-weight:700;color:#fff;transform:scaleX(0.9514)">HIPAA</div>
<div class="t" style="left:889.88px;top:412px;font-size:9px;font-weight:700;color:#fff;transform:scaleX(0.9408)">PCI-DSS</div>
<div class="t" style="left:936.77px;top:335px;font-size:11.5px;font-weight:400;color:#42474f;transform:scaleX(0.9477)">Gramm-Leach-Bliley Financial</div>
<div class="t" style="left:936.51px;top:350px;font-size:11.5px;font-weight:400;color:#42474f;transform:scaleX(0.9671)">Modernization Act</div>
<div class="t" style="left:936.51px;top:373px;font-size:11.5px;font-weight:400;color:#42474f;transform:scaleX(0.9636)">Health Insurance Portability and</div>
<div class="t" style="left:937.12px;top:388px;font-size:11.5px;font-weight:400;color:#42474f;transform:scaleX(0.9652)">Accountability Act</div>
<div class="t" style="left:936.53px;top:412px;font-size:11.5px;font-weight:400;color:#42474f;transform:scaleX(0.9418)">Payment Card Industry Data Security</div>
<div class="t" style="left:936.64px;top:427px;font-size:11.5px;font-weight:400;color:#42474f;transform:scaleX(0.9638)">Standard</div>
<svg class="abs" style="left:0;top:0" width="1140" height="612" viewBox="0 0 1140 612">
<rect x="74.00" y="136.30" width="520.10" height="169.50" fill="rgba(0,0,0,.15)"/>
<rect x="1.50" y="103.50" width="557.00" height="165.00" rx="0.00" fill="#fff" stroke="rgba(0,0,0,.14)" stroke-width="1.00"/>
<g transform="translate(18.90 116.90) scale(1.4000 1.3750)"><path d="M0.5 0.5 H3.9 L4.7 1.5 H9.5 V7.5 H0.5 Z" fill="none" stroke="#a6aec0" stroke-width="1.14" stroke-linejoin="round"/><path d="M0.5 0.5 H3.9 L4.7 1.9 H0.5 Z" fill="#a6aec0"/></g>
<rect x="2.00" y="144.10" width="556.00" height="1.00" fill="#eeeeee"/>
<g transform="translate(18.90 157.90) scale(1.4000 1.3750)"><path d="M0.5 0.5 H3.9 L4.7 1.5 H9.5 V7.5 H0.5 Z" fill="none" stroke="#a6aec0" stroke-width="1.14" stroke-linejoin="round"/><path d="M0.5 0.5 H3.9 L4.7 1.9 H0.5 Z" fill="#a6aec0"/></g>
<rect x="2.00" y="185.10" width="556.00" height="1.00" fill="#eeeeee"/>
<g transform="translate(18.90 198.90) scale(1.4000 1.3750)"><path d="M0.5 0.5 H3.9 L4.7 1.5 H9.5 V7.5 H0.5 Z" fill="none" stroke="#a6aec0" stroke-width="1.14" stroke-linejoin="round"/><path d="M0.5 0.5 H3.9 L4.7 1.9 H0.5 Z" fill="#a6aec0"/></g>
<rect x="2.00" y="226.10" width="556.00" height="1.00" fill="#eeeeee"/>
<g transform="translate(18.90 239.90) scale(1.4000 1.3750)"><path d="M0.5 0.5 H3.9 L4.7 1.5 H9.5 V7.5 H0.5 Z" fill="none" stroke="#a6aec0" stroke-width="1.14" stroke-linejoin="round"/><path d="M0.5 0.5 H3.9 L4.7 1.9 H0.5 Z" fill="#a6aec0"/></g>
</svg>
<div class="t" style="left:39.42px;top:114px;font-size:17px;font-weight:400;color:#52575f;transform:scaleX(0.8997)">/Shared/Sensitive Content/Human Resources</div>
<div class="t" style="left:39.42px;top:155px;font-size:17px;font-weight:400;color:#52575f;transform:scaleX(0.9110)">/Shared/Sensitive Content/Finance/Invoices</div>
<div class="t" style="left:39.42px;top:196px;font-size:17px;font-weight:400;color:#52575f;transform:scaleX(0.9078)">/Shared/Sensitive Content/Employee Private/Legal</div>
<div class="t" style="left:39.42px;top:237px;font-size:17px;font-weight:400;color:#52575f;transform:scaleX(0.9128)">/Shared/Sensitive Content/Medical/Patient Notes</div>
</div>
</body></html>
